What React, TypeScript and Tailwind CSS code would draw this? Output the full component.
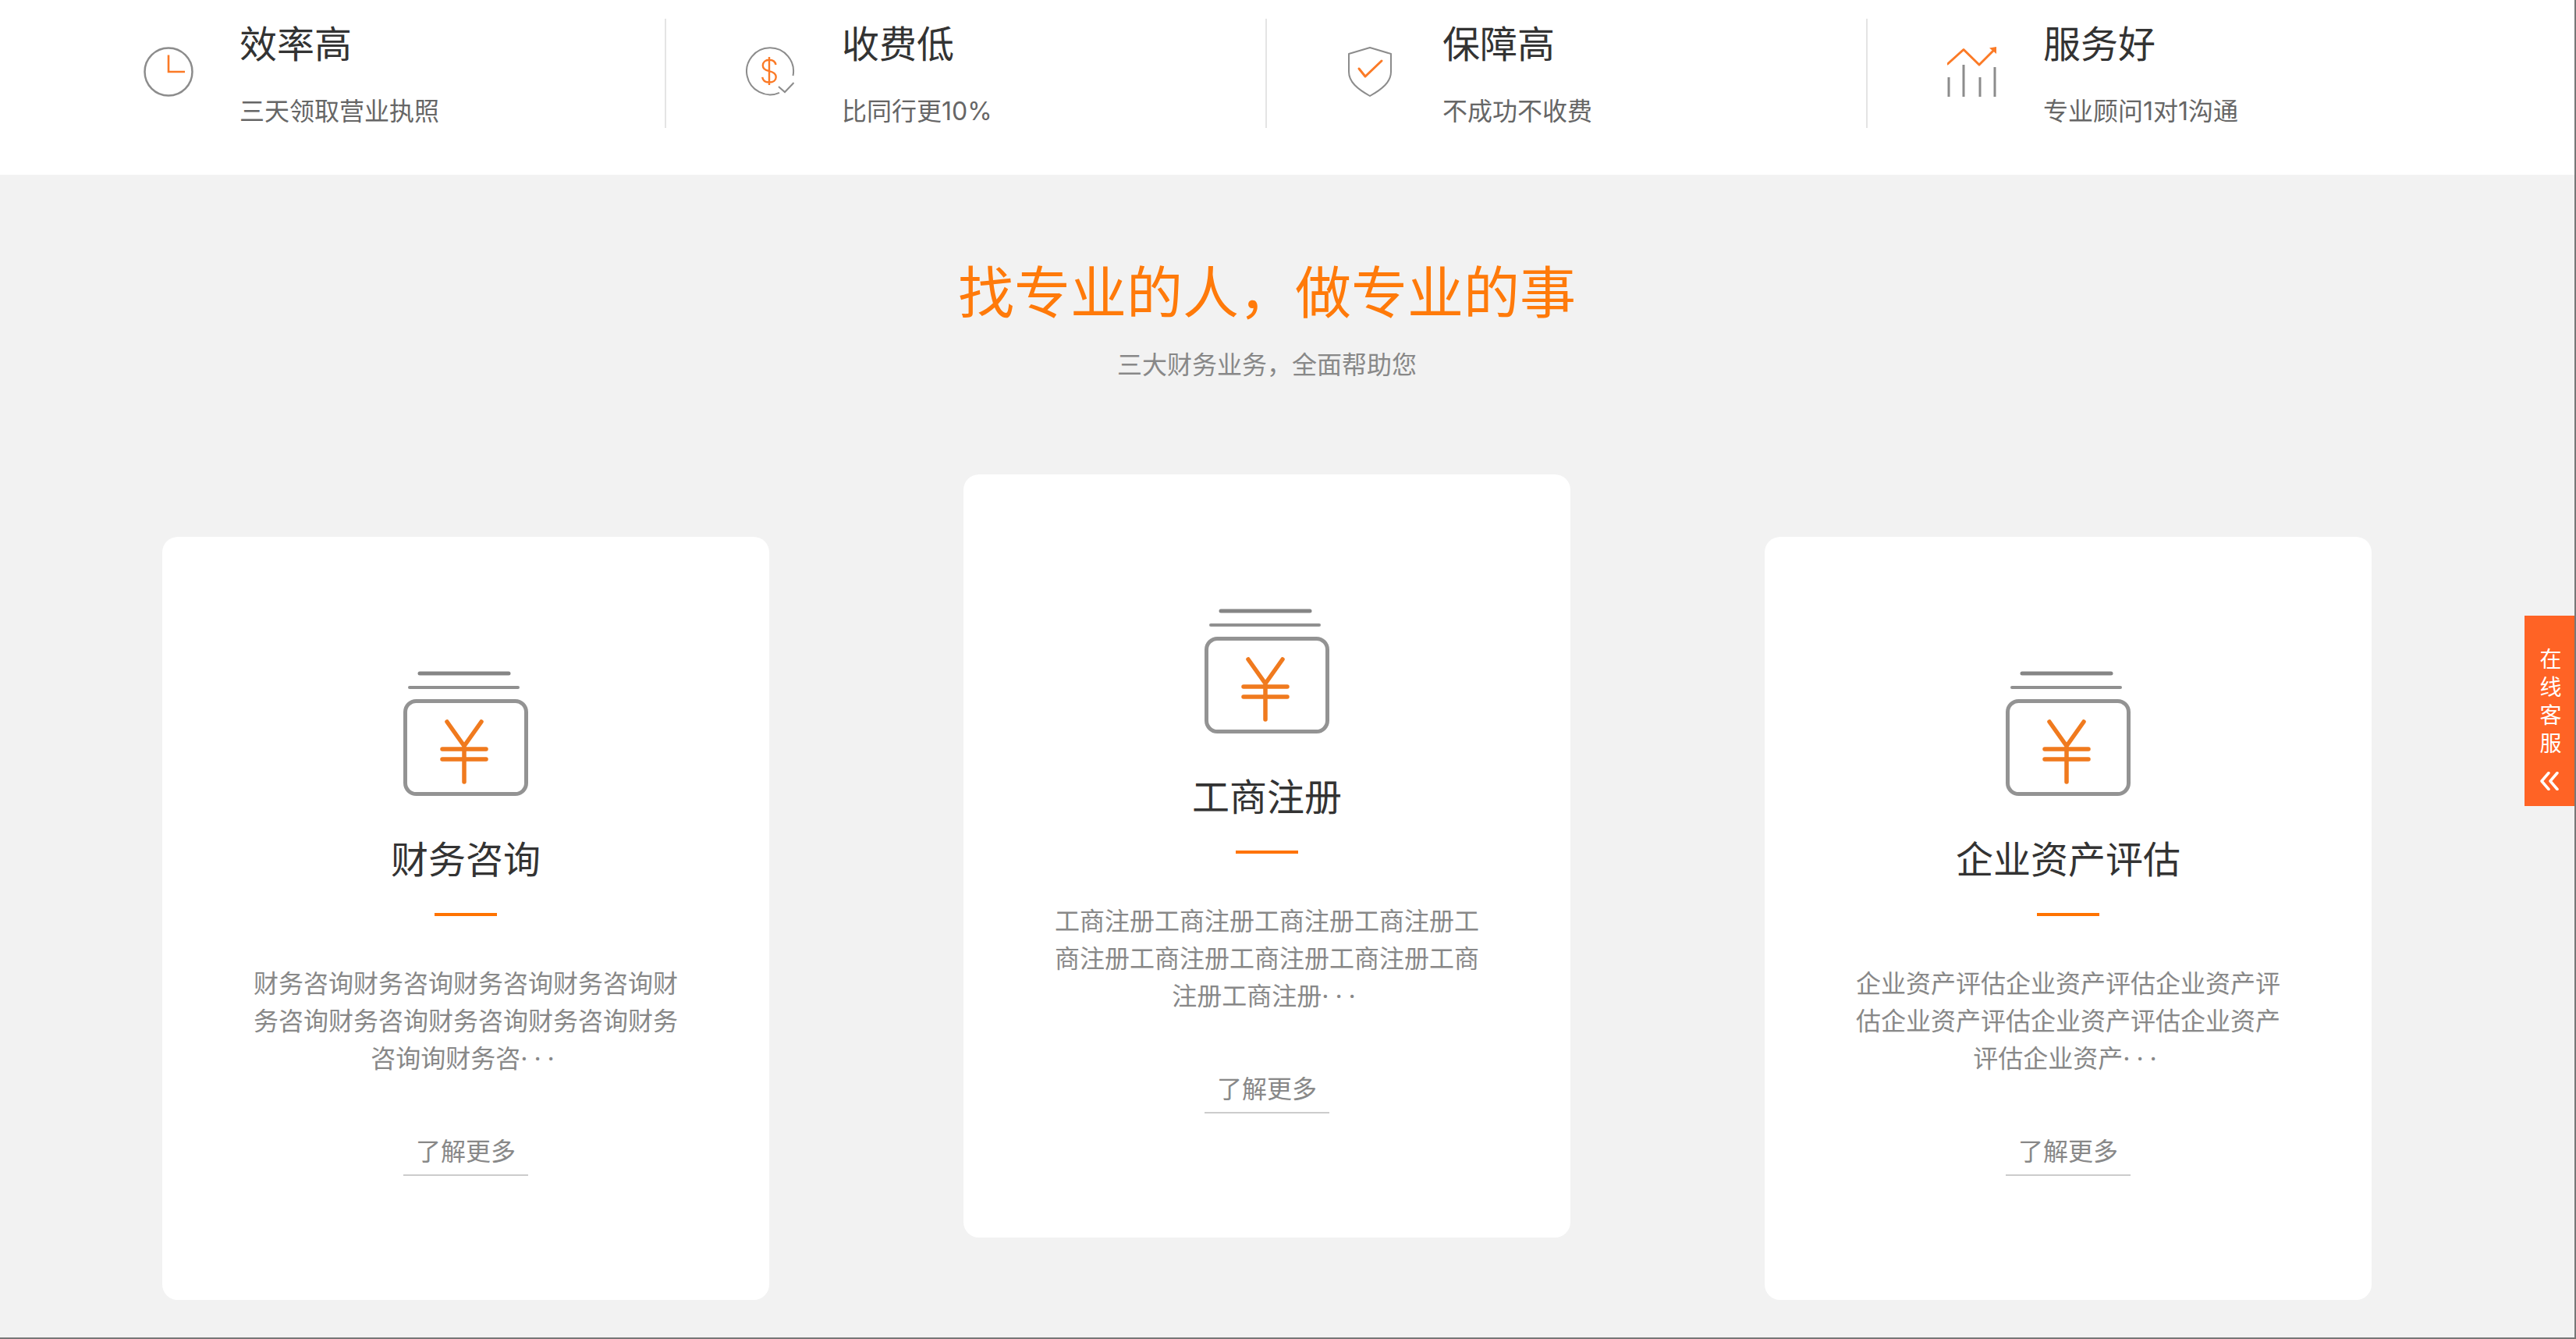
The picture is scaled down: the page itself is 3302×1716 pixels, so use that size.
import React from "react";

const GRAY = "#8c8c8c";
const ORANGE = "#fb7a26";

function Clock() {
  return (
    <svg width="64" height="64" viewBox="0 0 64 64" fill="none">
      <circle cx="32" cy="32" r="30.5" stroke={GRAY} strokeWidth="2.5" />
      <path d="M32 10.5V32H53" stroke={ORANGE} strokeWidth="2.6" />
    </svg>
  );
}
function Dollar() {
  return (
    <svg width="64" height="64" viewBox="0 0 64 64" fill="none">
      <path d="M60.5 37A30 30 0 1 0 43 58.8" stroke={GRAY} strokeWidth="2" />
      <path d="M42 51L50 58L61.5 46" stroke={GRAY} strokeWidth="2" />
      <path
        d="M38.5 23C37.5 18.5 34.5 16.8 30 16.8C25 16.8 21.8 19.8 21.8 24C21.8 28.2 25 30 30 31.2C35 32.4 38.7 34.5 38.7 38.8C38.7 43 35 45.5 30 45.5C25 45.5 21.8 43 21.2 38.8M30 13V49"
        stroke={ORANGE}
        strokeWidth="2.4"
      />
    </svg>
  );
}
function Shield() {
  return (
    <svg className="ml-[2px]" width="56" height="64" viewBox="0 0 56 64" fill="none">
      <path
        d="M28 1L55 9V32C55 45 44 54 28 63C12 54 1 45 1 32V9Z"
        stroke={GRAY}
        strokeWidth="2"
        strokeLinejoin="round"
      />
      <path d="M14 28L22 38L43 18" stroke={ORANGE} strokeWidth="3" strokeLinecap="round" strokeLinejoin="round" />
    </svg>
  );
}
function Chart() {
  return (
    <svg width="64" height="64" viewBox="0 0 64 64" fill="none">
      <path d="M2 39V64M21 23V64M42 39V64M61 26V64" stroke={GRAY} strokeWidth="3" />
      <path d="M0.5 22L21 3.5L41 23L59 5" stroke={ORANGE} strokeWidth="3" strokeLinecap="round" strokeLinejoin="round" />
      <path d="M54 1.5L63 0V9Z" fill={ORANGE} />
    </svg>
  );
}
function Yen() {
  return (
    <svg width="160" height="160" viewBox="0 0 160 160" fill="none">
      <path d="M21 3H135" stroke="#858585" strokeWidth="5" strokeLinecap="round" />
      <path d="M8 21H147" stroke="#909090" strokeWidth="4" strokeLinecap="round" />
      <rect x="2.5" y="38.5" width="155" height="119" rx="14" stroke="#939393" strokeWidth="5" />
      <path
        d="M56 65L78 96L100 65M50 100H106M50 113H106M78 96V142"
        stroke="#f07a1e"
        strokeWidth="5.5"
        strokeLinecap="round"
        strokeLinejoin="round"
      />
    </svg>
  );
}

const features = [
  { title: "效率高", sub: "三天领取营业执照", icon: <Clock /> },
  { title: "收费低", sub: "比同行更10%", icon: <Dollar /> },
  { title: "保障高", sub: "不成功不收费", icon: <Shield /> },
  { title: "服务好", sub: "专业顾问1对1沟通", icon: <Chart /> },
];

const cards = [
  { title: "财务咨询", text: "财务咨询财务咨询财务咨询财务咨询财务咨询财务咨询财务咨询财务咨询财务咨询询财务咨", raised: false },
  { title: "工商注册", text: "工商注册工商注册工商注册工商注册工商注册工商注册工商注册工商注册工商注册工商注册", raised: true },
  { title: "企业资产评估", text: "企业资产评估企业资产评估企业资产评估企业资产评估企业资产评估企业资产评估企业资产", raised: false },
];

function Sub({ text }: { text: string }) {
  return (
    <>
      {text.split(/([0-9%]+)/).map((part, i) =>
        /[0-9%]/.test(part) ? (
          <span key={i} className="font-['Inter']">
            {part}
          </span>
        ) : (
          part
        ),
      )}
    </>
  );
}

export default function App() {
  return (
    <div
      className="relative flex h-[1716px] w-[3302px] flex-col overflow-hidden border-r-2 border-b-2 border-[#777777] bg-[#f2f2f2]"
      style={{ fontFamily: '"Noto Sans CJK SC", "Noto Sans", sans-serif' }}
    >
      <header className="flex h-[224px] shrink-0 bg-white pt-[24px] pl-[82px]">
        {features.map((f, i) => (
          <div
            key={f.title}
            className={`flex h-[140px] w-[770px] ${i > 0 ? "border-l-2 border-[#e4e4e4]" : ""}`}
          >
            <div className="mt-[36px] ml-[102px] w-[64px] shrink-0">{f.icon}</div>
            <div className="-mt-[3px] ml-[59px]">
              <div className="text-[48px] leading-[64px] text-[#333333]">{f.title}</div>
              <div className="mt-[31px] h-[48px] text-[32px] leading-[48px] text-[#666666]">
                <Sub text={f.sub} />
              </div>
            </div>
          </div>
        ))}
      </header>

      <main className="flex w-[3248px] flex-col items-center pt-[98px]">
        <h1 className="text-[72px] leading-[96px] font-normal text-[#ff7a0a]">找专业的人，做专业的事</h1>
        <p className="mt-[23px] text-[32px] leading-[48px] text-[#888888]">三大财务业务，全面帮助您</p>
        <div className="mt-[119px] flex gap-[249px]">
          {cards.map((c) => (
            <article
              key={c.title}
              className={`flex h-[978px] w-[778px] flex-col items-center rounded-[20px] bg-white pt-[172px] ${c.raised ? "" : "mt-[80px]"}`}
            >
              <Yen />
              <h2 className="mt-[46px] text-[48px] leading-[64px] font-normal text-[#333333]">{c.title}</h2>
              <div className="mt-[40px] h-[4px] w-[80px] bg-[#ff7300]" />
              <p className="mt-[60px] h-[144px] w-[556px] text-center text-[32px] leading-[48px] text-[#888888]">
                {c.text}
                <span className="font-['Inter'] leading-[0] tracking-[8px]">···</span>
              </p>
              <a className="mt-[71px] w-[160px] border-b-2 border-[#cccccc] pb-[8px] text-center text-[32px] leading-[48px] text-[#888888]">
                了解更多
              </a>
            </article>
          ))}
        </div>
      </main>

      <aside className="absolute top-[789px] right-0 flex h-[244px] w-[64px] flex-col items-center bg-[#ff6325] pt-[36px] text-[28px] leading-[36px] text-white">
        <div className="flex flex-col items-center pl-[3px]">
          <span>在</span>
          <span>线</span>
          <span>客</span>
          <span>服</span>
        </div>
        <svg className="mt-[20px]" width="24" height="24" viewBox="0 0 24 24" fill="none">
          <path
            d="M11 1.5L2 12L11 22.5M22 1.5L13 12L22 22.5"
            stroke="white"
            strokeWidth="3.5"
            strokeLinecap="round"
            strokeLinejoin="round"
          />
        </svg>
      </aside>
    </div>
  );
}
